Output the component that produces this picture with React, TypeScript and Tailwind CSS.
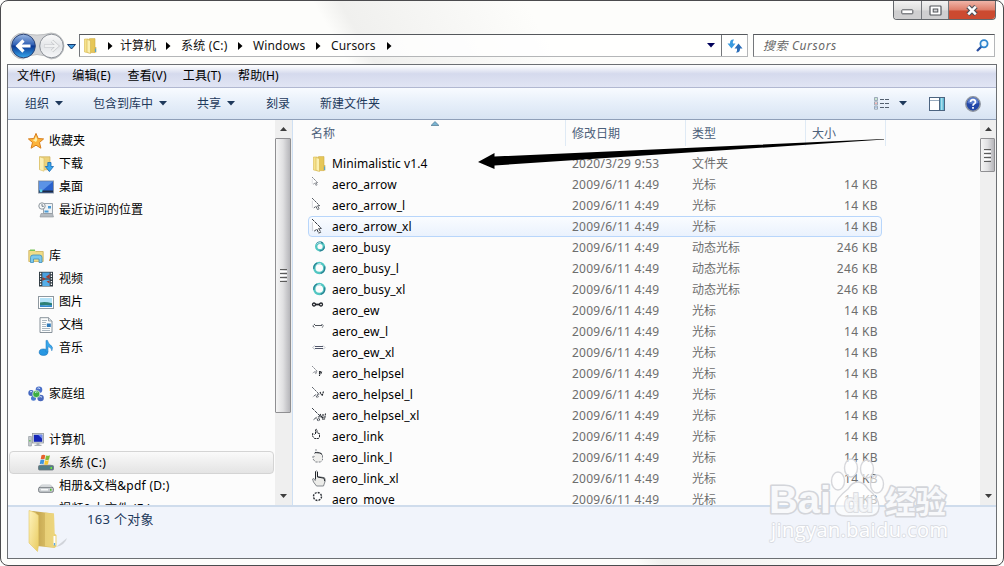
import type { ReactNode } from "react";

type FileRow = {
  name: string;
  date: string;
  type: string;
  size: string;
  icon: ReactNode;
  selected?: boolean;
};

type NavRow = { label: string; icon: ReactNode; child?: boolean; active?: boolean } | null;

function Icon({ children }: { children: ReactNode }) {
  return (
    <svg width="16" height="16" viewBox="0 0 16 16" className="block shrink-0 overflow-visible">
      {children}
    </svg>
  );
}

function FolderIcon() {
  return (
    <Icon>
      <path d="M1.500 1h4l1 1v13l-5-1z" fill="#f6e28b" stroke="#d9b94d" strokeWidth=".6" />
      <path d="M6.500.6h5.500v14H6.500z" fill="#e6c758" stroke="#cfab45" strokeWidth=".6" />
      <path d="M4 1.500l3.500 1v13L4 14.200z" fill="#fbf0b0" stroke="#d3b44c" strokeWidth=".6" />
      <path d="M11.500 9h1.800v5.500h-1.800z" fill="#d8bb58" />
      <path d="M12.600 10.500v3.500" stroke="#4aa2dc" />
    </Icon>
  );
}

function StarIcon() {
  return (
    <Icon>
      <path
        d="M8 .4l2.200 5.100 5.400.4-4.100 3.600 1.400 5.700L8 12.200l-4.900 3 1.400-5.700L.4 5.900l5.400-.4z"
        fill="#fcb43c"
        stroke="#d97f1c"
        strokeWidth="1"
      />
      <path d="M8 3l1.300 3.800L8 9 4.500 7l2-.4z" fill="#fff1a8" />
    </Icon>
  );
}

function DownloadIcon() {
  return (
    <Icon>
      <path d="M1.500.8h10.500v13H6l-4.500-.6z" fill="#ecd27a" stroke="#cdae58" strokeWidth=".7" />
      <path d="M1.500.8L6 2.200v13l-4.500-1.500z" fill="#fbefb4" stroke="#d8bd62" strokeWidth=".6" />
      <path d="M9.800 6.500h3.200v4h2.500L11.400 15.600 7.300 10.500h2.500z" fill="#39a6ee" stroke="#1568b3" strokeWidth=".8" />
    </Icon>
  );
}

function DesktopIcon() {
  return (
    <Icon>
      <rect x=".5" y="2" width="15" height="12" fill="#2a62cc" stroke="#8f99a6" />
      <path d="M1 2.500h14L5 11H1z" fill="#5b93e6" />
      <path d="M1 11.500h14v2H1z" fill="#1d2c45" />
      <circle cx="3" cy="11.800" r="1.500" fill="#5fd3e8" />
    </Icon>
  );
}

function RecentIcon() {
  return (
    <Icon>
      <path d="M5.500 1.500h9v10h-9z" fill="#eef2f5" stroke="#9aa4ad" />
      <path d="M10 4h3v2.500h-3zM6.500 8.500h4v2h-4z" fill="#4b9bd6" />
      <path d="M3 11.500h11.500l1 3.500H2z" fill="#b5bbc1" stroke="#8b9299" strokeWidth=".6" />
      <circle cx="4" cy="4" r="3.200" fill="#f5f7f8" stroke="#8f979e" />
      <path d="M4 2v2.300h1.800" fill="none" stroke="#51606d" strokeWidth=".8" />
    </Icon>
  );
}

function LibraryIcon() {
  return (
    <Icon>
      <path d="M.8 2.500h6l1 1h7.400v10H.8z" fill="#f1dd87" stroke="#cdae58" strokeWidth=".8" />
      <path d="M2 1.500h5v1.500H2z" fill="#7cc55b" />
      <path d="M2.500 14.500V9.500q0-2.500 2.500-2.500h6.500q2.500 0 2.500 2.500v5h-3v-3.500H5.500v3.500z" fill="#7cc8ec" stroke="#3f8fbd" strokeWidth=".8" />
    </Icon>
  );
}

function VideoIcon() {
  return (
    <Icon>
      <rect x="1" y=".8" width="14" height="14.700" fill="#2f3a42" />
      <path d="M4.300 1.500h7.400v6H4.300z" fill="#4aa0df" />
      <path d="M4.300 8.500h7.400v6.500H4.300z" fill="#55aee8" />
      <path d="M11.700 3l-4 3 4 2zM4.500 6l3 2-3 2zM11.500 9.500l-3 1 3 2z" fill="#a33a2c" />
      <path d="M2.600 1.800v13.500M13.400 1.800v13.500" stroke="#fff" strokeWidth="1.300" strokeDasharray="1.400 1.300" />
    </Icon>
  );
}

function PictureIcon() {
  return (
    <Icon>
      <rect x=".5" y="2.500" width="15" height="12" fill="#fff" stroke="#8e989f" />
      <path d="M2 4h12v9H2z" fill="#b4e2f7" />
      <path d="M2 8.500q5-1.500 12 .8v2H2z" fill="#2d7f74" />
      <path d="M2 11q6 .8 12 0v2H2z" fill="#3488cc" />
    </Icon>
  );
}

function DocumentIcon() {
  return (
    <Icon>
      <path d="M2 .7h8.500L14 4v11.500H2z" fill="#fcfdfd" stroke="#7c8790" strokeWidth=".9" />
      <path d="M10.500.7V4H14" fill="#dbe2e6" stroke="#7c8790" strokeWidth=".7" />
      <path d="M4 3.500h5M4 5.500h4M4 7.500h4M4 9.500h4M4 11.500h8M4 13.500h8" stroke="#97a6b1" strokeWidth=".8" />
      <path d="M8.800 6.500h4v3.500h-4z" fill="#2f79b9" />
    </Icon>
  );
}

function MusicIcon() {
  return (
    <Icon>
      <ellipse cx="5.500" cy="12.200" rx="4.300" ry="3.200" fill="#2797e2" stroke="#1470b8" strokeWidth=".6" />
      <path d="M8 12V.4h1.500q.6 3.300 3 4.600 3.200 2 1.300 5.800.2-3-3.800-4.200v5.400z" fill="#3aa8ec" stroke="#1773ba" strokeWidth=".5" />
    </Icon>
  );
}

function HomegroupIcon() {
  return (
    <Icon>
      <circle cx="11" cy="3.800" r="3.300" fill="#4a6fc8" />
      <circle cx="3.200" cy="7" r="2.900" fill="#4468c0" />
      <circle cx="12.600" cy="12" r="3.200" fill="#4a68bc" />
      <circle cx="5.500" cy="12.300" r="2.500" fill="#4c7ace" />
      <circle cx="8.300" cy="8" r="3.600" fill="#3cae40" stroke="#e3f4e0" strokeWidth=".7" />
      <path d="M9.500 2.300q1.500-1 2.600.5M7 6.500q1.500-1.200 2.500-.2M11.500 11q1.500-1 2.500.3M2 6q1-1 2.200-.2" stroke="#dceaff" fill="none" />
    </Icon>
  );
}

function ComputerIcon() {
  return (
    <Icon>
      <path d="M.6 4.500h2.800v9.500H.6z" fill="#c5cacf" stroke="#868e95" strokeWidth=".6" />
      <path d="M1.300 8h1.200v1.500H1.300z" fill="#52c13c" />
      <rect x="4.500" y="1.500" width="11" height="9.500" fill="#d8dcdf" stroke="#8e969c" strokeWidth=".8" />
      <path d="M5.800 2.800h8.400v7H5.800z" fill="#1526b8" />
      <path d="M10 2.800h4.200v4z" fill="#6f8cf0" />
      <path d="M8.500 11h3v1.800h2V14h-7v-1.200h2z" fill="#a9b0b6" />
    </Icon>
  );
}

function SystemDriveIcon() {
  return (
    <Icon>
      <path d="M1.500 10.500l2-1.500h9l2 1.500z" fill="#cfd4d8" />
      <rect x=".5" y="10.500" width="15" height="4.500" rx="1" fill="#537c86" stroke="#6b757c" strokeWidth=".8" />
      <path d="M12.500 12h1.500v2h-1.500z" fill="#6dea3a" />
      <path d="M3.500.2q2-1 3.800 0L6.500 4.300q-2-.8-3.800 0z" fill="#e8612c" />
      <path d="M8 .5q2 .8 4-.2L11 4.500q-1.800 1-3.800.2z" fill="#7fbb3a" />
      <path d="M2.500 5q1.800-.8 3.800 0L5.500 9.200q-2-.8-3.800 0z" fill="#3f94df" />
      <path d="M7 5.300q2 .8 3.800-.2L10 9.300q-1.900 1-3.800.2z" fill="#f7c631" />
    </Icon>
  );
}

function DriveIcon() {
  return (
    <Icon>
      <path d="M1 9.500L3.500 7h9L15 9.500z" fill="#eceef0" stroke="#a3a9ae" strokeWidth=".6" />
      <rect x=".6" y="9.300" width="14.800" height="5" rx="1.500" fill="#c9cdd1" stroke="#6f757b" strokeWidth=".9" />
      <path d="M3 11.700h7" stroke="#f7f8f8" strokeWidth="1.500" />
      <path d="M12 10.800h1.500v2H12z" fill="#4fc22e" />
    </Icon>
  );
}

function PointerIcon({ scale }: { scale: number }) {
  return (
    <Icon>
      <g transform={`scale(${scale})`}>
        <path d="M0 0l8.500 8.500H6l2 3.500-2 .8-1.500-3.500L2 11" fill="#fff" stroke="#30363f" strokeWidth=".9" strokeDasharray="3 .6" />
        <path d="M.4 3v8" stroke="#c4c8cd" strokeWidth=".7" />
      </g>
    </Icon>
  );
}

function BusyIcon({ small }: { small?: boolean }) {
  const cx = small ? 8 : 7.3;
  const cy = small ? 6.5 : 7;
  const r = small ? 3.8 : 5;
  return (
    <Icon>
      <circle cx={cx} cy={cy} r={r} fill="none" stroke="#52c6c2" strokeWidth="2.400" />
      <circle cx={cx} cy={cy} r={r + 0.5} fill="none" stroke="#2b7d90" strokeWidth="1.200" strokeDasharray="7 9" />
      <path d="M4.500 4q2-2 4.500-1.200" fill="none" stroke="#c5e4ee" />
    </Icon>
  );
}

function ResizeIcon({ variant }: { variant: number }) {
  if (variant === 0) {
    return (
      <Icon>
        <path d="M3 1.500h5" stroke="#23262c" strokeWidth="1.800" />
        <circle cx="2" cy="1.500" r="1.500" fill="#fff" stroke="#23262c" strokeWidth="1.300" />
        <circle cx="9" cy="1.500" r="1.500" fill="#fff" stroke="#23262c" strokeWidth="1.300" />
      </Icon>
    );
  }
  if (variant === 1) {
    return (
      <Icon>
        <path d="M3 1.500h7" stroke="#50555d" />
        <path d="M3 0L.8 2 3 4M9.500 0l2 2-2 2" fill="none" stroke="#444a53" strokeDasharray="2 .7" />
      </Icon>
    );
  }
  return (
    <Icon>
      <path d="M3 1.500h8M3 3.500h8" stroke="#50566a" />
      <path d="M3 .5L.5 2.500 3 4.500M11 .5l2 2-2 2" fill="none" stroke="#bfc3c9" />
    </Icon>
  );
}

function HelpPointerIcon({ scale, marks }: { scale: number; marks: string }) {
  return (
    <Icon>
      <g transform={`scale(${scale})`}>
        <path d="M0 0l8 8H5.500l1.500 3-1.500.8L4 8.500 1 11" fill="#fff" stroke="#3c424b" strokeWidth=".9" strokeDasharray="3 .7" />
      </g>
      <path d={marks} fill="none" stroke="#22262c" strokeWidth="1.100" strokeDasharray="2 .5" />
    </Icon>
  );
}

function HandIcon({ variant }: { variant: number }) {
  if (variant === 0) {
    return (
      <Icon>
        <path d="M3.500 5V.8q.8-1 1.500 0v3l2.500.8V8L6.500 9.500H2.500L.5 7V4.500l2 1" fill="#fff" stroke="#23272d" strokeDasharray="2.500 .6" />
      </Icon>
    );
  }
  if (variant === 1) {
    return (
      <Icon>
        <path d="M2.500 4l1-2 5 .8 2 2V10L8.500 12h-5L1 9V6l2 .5" fill="#efefed" stroke="#70757c" strokeWidth=".9" strokeDasharray="2.500 1" />
        <path d="M3 2.500l5 .5 2 1.500" fill="none" stroke="#2b2f36" />
        <path d="M3 0h2" stroke="#8c9097" />
      </Icon>
    );
  }
  return (
    <Icon>
      <path d="M3.500 9V.5q1.200-1.400 2 0v5l7 1.200q1 1 .5 3.800L11.500 15h-7L1.500 11 .5 8l1.500-.4L3.500 10" fill="#ecece9" stroke="#6b7076" strokeWidth=".8" />
      <path d="M3.500 8V.5M5.500 1v5l6.500 1.200.8 3" fill="none" stroke="#23272d" />
    </Icon>
  );
}

function MoveIcon() {
  return (
    <Icon>
      <circle cx="5.500" cy="4.500" r="4" fill="#fff" stroke="#2c3036" strokeWidth="1.400" strokeDasharray="2 1.100" />
    </Icon>
  );
}

const CURSOR_DATE = "2009/6/11 4:49";

const files: FileRow[] = [
  { name: "Minimalistic v1.4", date: "2020/3/29 9:53", type: "文件夹", size: "", icon: <FolderIcon /> },
  { name: "aero_arrow", date: CURSOR_DATE, type: "光标", size: "14 KB", icon: <PointerIcon scale={0.65} /> },
  { name: "aero_arrow_l", date: CURSOR_DATE, type: "光标", size: "14 KB", icon: <PointerIcon scale={0.9} /> },
  { name: "aero_arrow_xl", date: CURSOR_DATE, type: "光标", size: "14 KB", icon: <PointerIcon scale={1.1} />, selected: true },
  { name: "aero_busy", date: CURSOR_DATE, type: "动态光标", size: "246 KB", icon: <BusyIcon small /> },
  { name: "aero_busy_l", date: CURSOR_DATE, type: "动态光标", size: "246 KB", icon: <BusyIcon /> },
  { name: "aero_busy_xl", date: CURSOR_DATE, type: "动态光标", size: "246 KB", icon: <BusyIcon /> },
  { name: "aero_ew", date: CURSOR_DATE, type: "光标", size: "14 KB", icon: <ResizeIcon variant={0} /> },
  { name: "aero_ew_l", date: CURSOR_DATE, type: "光标", size: "14 KB", icon: <ResizeIcon variant={1} /> },
  { name: "aero_ew_xl", date: CURSOR_DATE, type: "光标", size: "14 KB", icon: <ResizeIcon variant={2} /> },
  { name: "aero_helpsel", date: CURSOR_DATE, type: "光标", size: "14 KB", icon: <HelpPointerIcon scale={0.65} marks="M7 5.500l2.500.5-1 2.500M7.500 6v4" /> },
  { name: "aero_helpsel_l", date: CURSOR_DATE, type: "光标", size: "14 KB", icon: <HelpPointerIcon scale={0.9} marks="M8 5l1.500 3M11.500 4.500L10 9" /> },
  { name: "aero_helpsel_xl", date: CURSOR_DATE, type: "光标", size: "14 KB", icon: <HelpPointerIcon scale={1.1} marks="M8 6l3 5M11 6v6M13.500 5.500l-1 6" /> },
  { name: "aero_link", date: CURSOR_DATE, type: "光标", size: "14 KB", icon: <HandIcon variant={0} /> },
  { name: "aero_link_l", date: CURSOR_DATE, type: "光标", size: "14 KB", icon: <HandIcon variant={1} /> },
  { name: "aero_link_xl", date: CURSOR_DATE, type: "光标", size: "14 KB", icon: <HandIcon variant={2} /> },
  { name: "aero_move", date: CURSOR_DATE, type: "光标", size: "14 KB", icon: <MoveIcon /> },
];

// null leaves an empty line between groups
const nav: NavRow[] = [
  { label: "收藏夹", icon: <StarIcon /> },
  { label: "下载", icon: <DownloadIcon />, child: true },
  { label: "桌面", icon: <DesktopIcon />, child: true },
  { label: "最近访问的位置", icon: <RecentIcon />, child: true },
  null,
  { label: "库", icon: <LibraryIcon /> },
  { label: "视频", icon: <VideoIcon />, child: true },
  { label: "图片", icon: <PictureIcon />, child: true },
  { label: "文档", icon: <DocumentIcon />, child: true },
  { label: "音乐", icon: <MusicIcon />, child: true },
  null,
  { label: "家庭组", icon: <HomegroupIcon /> },
  null,
  { label: "计算机", icon: <ComputerIcon /> },
  { label: "系统 (C:)", icon: <SystemDriveIcon />, child: true, active: true },
  { label: "相册&文档&pdf (D:)", icon: <DriveIcon />, child: true },
  { label: "视频&大文件 (E:)", icon: <DriveIcon />, child: true },
];

const menus = ["文件(F)", "编辑(E)", "查看(V)", "工具(T)", "帮助(H)"];

function Caret({ className }: { className: string }) {
  return (
    <svg width="8" height="5" viewBox="0 0 8 5" className={className}>
      <path d="M0 0h8L4 4.500z" fill="currentColor" />
    </svg>
  );
}

function CrumbArrow() {
  return (
    <span className="flex w-[25px] shrink-0 justify-center">
      <svg width="5" height="8" viewBox="0 0 5 8">
        <path d="M0 0l4.500 4L0 8z" fill="#000" />
      </svg>
    </span>
  );
}

function ScrollEnd({ down }: { down?: boolean }) {
  return (
    <div className="flex h-[18px] shrink-0 items-center justify-center">
      <svg width="7" height="4" viewBox="0 0 7 4">
        <path d={down ? "M0 0h7L3.500 4z" : "M0 4h7L3.500 0z"} fill="#3d3d3d" />
      </svg>
    </div>
  );
}

function Thumb({ className }: { className: string }) {
  return (
    <div
      className={`mr-px flex shrink-0 flex-col items-center justify-center gap-px rounded-[1px] border border-[#8f8f92] bg-linear-to-r from-[#f5f5f5] via-[#e0e0e2] to-[#b6b6ba] ${className}`}
    >
      <span className="h-px w-[7px] bg-[#5c5c5c]" />
      <span className="h-px w-[7px] bg-white" />
      <span className="h-px w-[7px] bg-[#5c5c5c]" />
      <span className="h-px w-[7px] bg-white" />
      <span className="h-px w-[7px] bg-[#5c5c5c]" />
      <span className="h-px w-[7px] bg-white" />
      <span className="h-px w-[7px] bg-[#5c5c5c]" />
    </div>
  );
}

function WindowButtons() {
  return (
    <div className="mr-[7px] flex h-[19px] w-[103px] overflow-hidden rounded-b-[4px] border border-t-0 border-[#63676b]">
      <div className="flex w-[28px] items-center justify-center border-r border-[#74777b] bg-linear-to-b from-[#f3f3f2] via-[#dededd] via-50% to-[#cfcfd0] to-55%">
        <svg width="13" height="6" viewBox="0 0 13 6" className="mt-1">
          <rect x=".8" y=".8" width="11" height="4" rx=".6" fill="#fff" stroke="#53565b" />
        </svg>
      </div>
      <div className="flex w-[27px] items-center justify-center border-r border-[#74777b] bg-linear-to-b from-[#f3f3f2] via-[#dededd] via-50% to-[#cfcfd0] to-55%">
        <svg width="13" height="11" viewBox="0 0 13 11">
          <rect x="1" y="1" width="11" height="9" rx=".8" fill="#fff" stroke="#53565b" strokeWidth="1.200" />
          <rect x="4.200" y="4" width="4.600" height="3" fill="#d5d6d8" stroke="#53565b" />
        </svg>
      </div>
      <div className="flex flex-1 items-center justify-center bg-linear-to-b from-[#efb5a8] via-[#dd7d69] via-50% to-[#cc4a30] to-55%">
        <svg width="14" height="11" viewBox="0 0 14 11">
          <path d="M3 1.500l8 8M11 1.500l-8 8" stroke="#50535b" strokeWidth="4.800" />
          <path d="M3.200 1.700l7.600 7.600M10.800 1.700L3.200 9.300" stroke="#fff" strokeWidth="2.500" />
        </svg>
      </div>
    </div>
  );
}

function NavButtons() {
  return (
    <svg width="68" height="28" viewBox="0 0 68 28" className="block shrink-0">
      <defs>
        <linearGradient id="back" x1="0" y1="0" x2="0" y2="1">
          <stop offset="0" stopColor="#9cb9e4" />
          <stop offset=".45" stopColor="#2f5fb4" />
          <stop offset=".5" stopColor="#0a3693" />
          <stop offset="1" stopColor="#37a9ee" />
        </linearGradient>
        <linearGradient id="forward" x1="0" y1="0" x2="0" y2="1">
          <stop offset="0" stopColor="#fbfbfb" />
          <stop offset=".5" stopColor="#e3e5e8" />
          <stop offset="1" stopColor="#f7f8f9" />
        </linearGradient>
      </defs>
      <path d="M13 1q14 4 28 0a12.800 12.800 0 010 26q-14-9-28 0a12.800 12.800 0 010-26z" fill="#d4d5d7" stroke="#b3b5b8" strokeWidth=".8" />
      <circle cx="13.500" cy="14" r="11.800" fill="url(#back)" stroke="#2c4476" />
      <path d="M20.500 14H9M13.500 8.500L7.800 14l5.700 5.500" fill="none" stroke="#fff" strokeWidth="3.200" />
      <circle cx="41.500" cy="14" r="11.800" fill="url(#forward)" stroke="#8b9097" />
      <path d="M34 14h12M42 9l5.500 5-5.500 5" fill="none" stroke="#c4c6c9" strokeWidth="3.200" />
      <path d="M34.500 14h11.500M42 9l5.500 5-5.500 5" fill="none" stroke="#f0f1f2" strokeWidth="2" />
      <path d="M57.500 12.500h8L61.500 17z" fill="#3f9ce0" stroke="#173a6d" />
    </svg>
  );
}

function TitleBar() {
  return (
    <div className="flex h-[33px] shrink-0 items-start justify-end">
      <WindowButtons />
    </div>
  );
}

function AddressRow() {
  return (
    <div className="flex h-[31px] shrink-0 items-start pl-[9px] pr-[8px]">
      <div className="-mt-[2px] mr-px">
        <NavButtons />
      </div>
      <div className="flex h-[23px] w-[669px] shrink-0 border border-[#b4b6b8] border-t-[#55585c] border-l-[#74777b] bg-white/80">
        <div className="flex flex-1 items-center pl-[3px] text-[#111]">
          <FolderIcon />
          <span className="flex w-[22px] justify-center">
            <svg width="5" height="8" viewBox="0 0 5 8">
              <path d="M0 0l4.500 4L0 8z" />
            </svg>
          </span>
          <span className="-ml-px w-[36px]">计算机</span>
          <CrumbArrow />
          <span className="w-[47px] tracking-[0.2px]">系统 (C:)</span>
          <CrumbArrow />
          <span className="w-[53px] tracking-[0.15px]">Windows</span>
          <CrumbArrow />
          <span className="w-[46px] tracking-[0.15px]">Cursors</span>
          <CrumbArrow />
          <Caret className="ml-auto mr-[6px] text-[#00005a]" />
        </div>
        <div className="flex w-[26px] items-center justify-center border-l border-[#74777b]">
          <svg width="16" height="14" viewBox="0 0 16 14">
            <path d="M7 .5Q2.800 0 3 4.500H.5l4 5 4-5H6Q5.500 2.500 7 .5z" fill="#3a9be0" />
            <path d="M9 13.500q4.200.5 4-4h2.500l-4-5-4 5H10q.5 2-1 4z" fill="#2a6cb8" />
          </svg>
        </div>
      </div>
      <div className="ml-[5px] flex h-[23px] flex-1 items-center border border-[#b4b6b8] border-t-[#55585c] border-l-[#74777b] bg-white/80 pl-[9px] pr-[5px]">
        <span className="flex-1 text-[#686868] italic tracking-[0.6px]">搜索 Cursors</span>
        <svg width="13" height="13" viewBox="0 0 13 13">
          <path d="M1 12l4.500-4.500" stroke="#2a4fa0" strokeWidth="2.300" />
          <circle cx="8" cy="4.800" r="3.600" fill="#f2faff" stroke="#2f86cf" strokeWidth="1.800" />
        </svg>
      </div>
    </div>
  );
}

function Toolbar() {
  return (
    <div className="flex h-8 shrink-0 items-center border-b border-[#8f9fb8] bg-linear-to-b from-[#f8fbff] via-[#e8f0fa] via-45% to-[#d8e4f3] pl-[17px] pr-[15px] text-[#1e395b]">
      <span>组织</span>
      <Caret className="ml-[6px] mr-[30px]" />
      <span>包含到库中</span>
      <Caret className="ml-[6px] mr-[30px]" />
      <span>共享</span>
      <Caret className="ml-[6px] mr-[31px]" />
      <span className="mr-[30px]">刻录</span>
      <span>新建文件夹</span>
      <svg width="15" height="13" viewBox="0 0 15 13" className="ml-auto">
        <path d="M.5.500h3v3h-3zM.5 4.800h3v3h-3zM.5 9.200h3v3h-3z" fill="#fff" stroke="#8795a6" strokeWidth=".8" />
        <path d="M1.500 1.500h1v1h-1z" fill="#2b9a4a" />
        <path d="M1.500 5.800h1v1h-1z" fill="#d93030" />
        <path d="M1.500 10.200h1v1h-1z" fill="#2769c4" />
        <path d="M6 2.500h9M6 6.500h9M6 10.500h9" stroke="#53606f" strokeDasharray="4 1" />
      </svg>
      <Caret className="ml-[10px] mr-[22px]" />
      <svg width="16" height="14" viewBox="0 0 16 14" className="mr-5">
        <rect x=".5" y=".5" width="15" height="13" fill="#fff" stroke="#4c6480" />
        <path d="M1 3.500h9" stroke="#9aacbf" />
        <path d="M10.500 1h4.500v12h-4.500z" fill="#62b9d4" />
        <path d="M12 1h1.500v12H12z" fill="#a9e0ee" />
        <path d="M10.500 1v12" stroke="#4c6480" />
      </svg>
      <svg width="16" height="16" viewBox="0 0 16 16">
        <circle cx="8" cy="8" r="7.200" fill="#2347a8" stroke="#8e959f" strokeWidth="1.500" />
        <path d="M2.500 7a5.500 5.500 0 0111 0q-5 2-11 0z" fill="#5d7fcf" />
        <path d="M5.500 6q.2-2.300 2.500-2.300T10.500 6Q10.400 7.200 9 8q-1 .6-1 1.800M8 11v1.700" fill="none" stroke="#fff" strokeWidth="1.700" />
      </svg>
    </div>
  );
}

function Sidebar() {
  return (
    <div className="flex w-[285px] shrink-0 border-r border-[#cfe0f3]">
      <div className="w-[267px] shrink-0 overflow-hidden pl-px pt-[9px]">
        {nav.map((row, i) =>
          row ? (
            <div
              key={i}
              className={`flex h-[23px] w-[265px] items-center rounded-sm border ${
                row.active
                  ? "border-[#d4d4d4] bg-linear-to-b from-[#fafafa] to-[#e4e4e4]"
                  : "border-transparent"
              } ${row.child ? "pl-[28px]" : "pl-[18px]"}`}
            >
              {row.icon}
              <span className={`ml-[5px] whitespace-nowrap ${row.label.includes("(") ? "tracking-[0.28px]" : ""}`}>
                {row.label}
              </span>
            </div>
          ) : (
            <div key={i} className="h-[23px]" />
          ),
        )}
      </div>
      <div className="flex w-[17px] flex-col bg-[#efefef]">
        <ScrollEnd />
        <Thumb className="h-[275px]" />
        <div className="flex-1" />
        <ScrollEnd down />
      </div>
    </div>
  );
}

function FileList() {
  return (
    <div className="relative flex flex-1 flex-col overflow-hidden">
      <svg width="8" height="5" viewBox="0 0 8 5" className="absolute left-[138px] top-[1px]">
        <path d="M0 4.500L4 .5l4 4z" fill="#79b4d2" stroke="#3c6680" strokeWidth=".6" />
      </svg>
      <div className="flex h-[26px] w-[593px] shrink-0 items-center text-[#4c607a]">
        <span className="flex h-full w-[273px] items-center border-r border-[#dfeaf5] pl-[18px] pt-px">名称</span>
        <span className="flex h-full w-[120px] items-center border-r border-[#dfeaf5] pl-[6px] pt-px">修改日期</span>
        <span className="flex h-full w-[120px] items-center border-r border-[#dfeaf5] pl-[6px] pt-px">类型</span>
        <span className="flex h-full w-[80px] items-center border-r border-[#dfeaf5] pl-[6px] pt-px">大小</span>
      </div>
      <div className="mt-[7px] flex flex-col pl-[15px]">
        {files.map((file) => (
          <div
            key={file.name}
            className={`flex h-[21px] w-[574px] shrink-0 items-center rounded-sm border pl-[3px] pr-[3px] ${
              file.selected ? "border-[#b8d6fb] bg-linear-to-b from-[#fafcff] to-[#eaf2fd]" : "border-transparent"
            }`}
          >
            <span className="w-5">{file.icon}</span>
            <span className="w-[240px] tracking-[0.1px] text-black">{file.name}</span>
            <span className="w-[120px] tracking-[0.25px] text-[#6d6d6d]">{file.date}</span>
            <span className="flex-1 text-[#6d6d6d]">{file.type}</span>
            <span className="tracking-[0.4px] text-[#6d6d6d]">{file.size}</span>
          </div>
        ))}
      </div>
    </div>
  );
}

function DetailsPane() {
  return (
    <div className="flex h-[53px] shrink-0 items-start border-t-2 border-[#cfdcec] bg-[#f1f4fb] pl-5">
      <svg width="40" height="46" viewBox="0 0 40 46" className="mt-[2px] shrink-0">
        <defs>
          <linearGradient id="cover" x1="0" y1="0" x2="1" y2="1">
            <stop offset="0" stopColor="#fff3bd" />
            <stop offset="1" stopColor="#e9cc62" />
          </linearGradient>
          <linearGradient id="inside" x1="0" y1="0" x2="1" y2="0">
            <stop offset="0" stopColor="#bb9b47" />
            <stop offset="1" stopColor="#ecd377" />
          </linearGradient>
        </defs>
        <path d="M28 38l11-9q-2 7-11 9z" fill="#c3c6cc" opacity=".7" />
        <path d="M4 2l22 2.500.5 20 2 1.500v11.500l-2 1.500-17-2z" fill="url(#inside)" />
        <path d="M17 3.500l9 1.200.5 21-.8 12.500-8.700-1z" fill="#efd981" opacity=".7" />
        <path d="M1 1.500q6 1 9.500 5V36l-1 6.500L1 34z" fill="url(#cover)" stroke="#e2c663" strokeWidth=".6" />
        <path d="M26.500 27v9" stroke="#fff" strokeWidth="2" />
        <path d="M26.500 34v2.500" stroke="#5aa8e6" strokeWidth="1.400" />
      </svg>
      <span className="ml-[19px] mt-[2px] text-[13px] leading-5 tracking-[0.3px] text-[#1e395b]">163 个对象</span>
    </div>
  );
}

function Watermark() {
  return (
    <svg width="204" height="96" viewBox="0 0 204 96" className="pointer-events-none absolute left-[760px] top-[455px]">
      <g fill="#fff" fillOpacity=".6" stroke="#d6d7db" strokeWidth="1.400">
        <ellipse cx="78" cy="26" rx="6.500" ry="9" />
        <ellipse cx="91" cy="13" rx="6.500" ry="9" />
        <ellipse cx="107" cy="14" rx="6.500" ry="9" />
        <ellipse cx="117" cy="29" rx="6.500" ry="9" />
        <path d="M98 27q6 0 10 7 11 9 11 18 0 9-10 9H86q-11 0-11-9 0-8 13-18 4-7 10-7z" />
      </g>
      <g
        fill="#f8f9fb"
        stroke="#d3d5da"
        strokeWidth="3.200"
        strokeLinejoin="round"
        paintOrder="stroke"
        className="font-['Liberation_Sans','Noto_Sans_CJK_SC',sans-serif] font-bold"
      >
        <text x="9" y="58" fontSize="38" textLength="62" lengthAdjust="spacingAndGlyphs">Bai</text>
        <text x="84" y="57" fontSize="25" textLength="29" strokeWidth="2" fillOpacity=".8" strokeOpacity=".8">du</text>
        <text x="125" y="58" fontSize="31" textLength="61" lengthAdjust="spacingAndGlyphs">经验</text>
      </g>
      <text
        x="11"
        y="82"
        fontSize="20"
        textLength="177"
        fill="#fff"
        stroke="#dadde3"
        strokeWidth="1.800"
        strokeLinejoin="round"
        paintOrder="stroke"
        className="font-['Open_Sans',sans-serif] font-normal"
      >
        jingyan.baidu.com
      </text>
    </svg>
  );
}

export default function App() {
  return (
    <div className="relative h-[566px] w-[1004px] overflow-hidden bg-[#fdfdfc] font-['Noto_Sans','Noto_Sans_CJK_SC',sans-serif] text-xs leading-4 text-black">
      <div className="flex h-full flex-col rounded-lg border border-[#4b4b4e] bg-linear-[60deg] from-[#fdfdfb] from-48% via-[#f0f0ee] via-50% to-[#fdfdfb] to-64% pb-[6px]">
        <TitleBar />
        <AddressRow />
        <div className="mx-[6px] -mt-px flex flex-1 flex-col overflow-hidden border border-[#6c6f73] bg-[#fcfcfc]">
          <div className="flex h-[23px] shrink-0 items-center border-b border-[#b1b8d1] bg-linear-to-b from-[#fbfcfe] from-5% via-[#d5daed] via-40% to-[#e1e5f4] pl-[9px]">
            {menus.map((menu) => (
              <span key={menu} className="w-[55.25px] whitespace-nowrap tracking-[0.15px]">
                {menu}
              </span>
            ))}
          </div>
          <Toolbar />
          <div className="flex h-[385px] shrink-0 overflow-hidden">
            <Sidebar />
            <FileList />
            <div className="flex w-4 shrink-0 flex-col bg-[#efefef]">
              <ScrollEnd />
              <Thumb className="h-[34px]" />
              <div className="flex-1" />
              <ScrollEnd down />
            </div>
          </div>
          <DetailsPane />
        </div>
      </div>
      <svg width="410" height="36" viewBox="0 0 410 36" className="pointer-events-none absolute left-[476px] top-[136px]">
        <path d="M2 26l16.500-9v3.500L408 3v.6L18.500 29.500V33z" fill="#000" />
      </svg>
      <Watermark />
    </div>
  );
}
